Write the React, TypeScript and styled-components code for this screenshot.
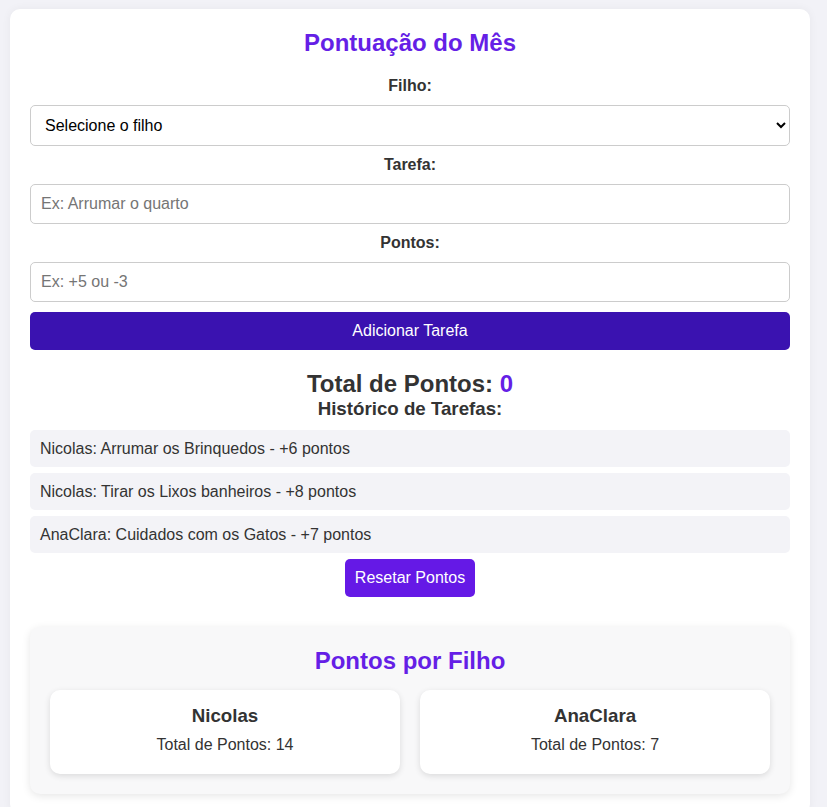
import { FC } from 'react'
import styled, { createGlobalStyle } from 'styled-components'

const GlobalStyle = createGlobalStyle`
  html, body {
    overflow: hidden;
  }
  body {
    margin: 0;
    padding: 9px 10px;
    background-color: #f2f2f7;
    font-family: 'Liberation Sans', Arial, sans-serif;
    color: #333;
  }
`

const Container = styled.div`
  width: 800px;
  box-sizing: border-box;
  background-color: #fff;
  border-radius: 10px;
  padding: 20px;
  box-shadow: 0 0 10px rgba(0, 0, 0, 0.05);
`

const Title = styled.h2`
  margin: 0 0 20px;
  font-size: 24px;
  text-align: center;
  color: #651fe6;
`

const Field = styled.div`
  display: flex;
  flex-direction: column;
  gap: 10px;
  margin-bottom: 10px;
`

const Label = styled.label`
  font-weight: bold;
  font-size: 16px;
  text-align: center;
  color: #333;
`

const Select = styled.select`
  height: 41px;
  padding: 0 10px;
  font-family: inherit;
  font-size: 16px;
  color: #000;
  border: 1px solid #ccc;
  border-radius: 5px;
  background: #fff;
`

const Input = styled.input`
  height: 40px;
  box-sizing: border-box;
  padding: 10px;
  font-family: inherit;
  font-size: 16px;
  border: 1px solid #ccc;
  border-radius: 5px;
  &::placeholder {
    color: #757575;
  }
`

const Button = styled.button<{ $variant?: 'primary' | 'reset' }>`
  height: 38px;
  padding: 0 10px;
  border: none;
  border-radius: 5px;
  font-family: inherit;
  font-size: 16px;
  color: #fff;
  cursor: pointer;
  background-color: ${(p) => (p.$variant === 'reset' ? '#6519e6' : '#3a12b0')};
  width: ${(p) => (p.$variant === 'reset' ? 'auto' : '100%')};
`

const Total = styled.h2`
  margin: 20px 0 0;
  font-size: 24px;
  text-align: center;
  color: #333;
  span {
    color: #651fe6;
  }
`

const HistoryTitle = styled.h3`
  margin: 0 0 10px;
  font-size: 18.72px;
  text-align: center;
  color: #333;
`

const HistoryList = styled.ul`
  list-style: none;
  margin: 0;
  padding: 0;
  display: flex;
  flex-direction: column;
  gap: 6px;
`

const HistoryItem = styled.li`
  background-color: #f3f3f7;
  border-radius: 5px;
  padding: 9px 10px;
  font-size: 16px;
  line-height: 19px;
  color: #333;
`

const Center = styled.div`
  display: flex;
  justify-content: center;
  margin-top: 6px;
`

const Summary = styled.section`
  margin-top: 30px;
  background-color: #f8f8f9;
  border-radius: 10px;
  padding: 20px;
  box-shadow: 0 2px 8px rgba(0, 0, 0, 0.1);
`

const SummaryTitle = styled.h2`
  margin: 0 0 15px;
  font-size: 24px;
  text-align: center;
  color: #651fe6;
`

const Cards = styled.div`
  display: grid;
  grid-template-columns: 1fr 1fr;
  gap: 20px;
`

const Card = styled.div`
  background-color: #fff;
  border-radius: 10px;
  padding: 15px 15px 20px;
  text-align: center;
  box-shadow: 0 2px 6px rgba(0, 0, 0, 0.12);
`

const CardName = styled.h3`
  margin: 0 0 9px;
  font-size: 18.72px;
  color: #333;
`

const CardTotal = styled.p`
  margin: 0;
  font-size: 16px;
  color: #333;
`

const history = [
  'Nicolas: Arrumar os Brinquedos - +6 pontos',
  'Nicolas: Tirar os Lixos banheiros - +8 pontos',
  'AnaClara: Cuidados com os Gatos - +7 pontos'
]

const kids = [
  { name: 'Nicolas', total: 14 },
  { name: 'AnaClara', total: 7 }
]

const App: FC = () => (
  <>
    <GlobalStyle />
    <Container>
      <Title>Pontuação do Mês</Title>
      <Field>
        <Label htmlFor='filho'>Filho:</Label>
        <Select id='filho' defaultValue=''>
          <option value=''>Selecione o filho</option>
          <option value='Nicolas'>Nicolas</option>
          <option value='AnaClara'>AnaClara</option>
        </Select>
      </Field>
      <Field>
        <Label htmlFor='tarefa'>Tarefa:</Label>
        <Input id='tarefa' placeholder='Ex: Arrumar o quarto' />
      </Field>
      <Field>
        <Label htmlFor='pontos'>Pontos:</Label>
        <Input id='pontos' placeholder='Ex: +5 ou -3' />
      </Field>
      <Button>Adicionar Tarefa</Button>

      <Total>
        Total de Pontos: <span>0</span>
      </Total>
      <HistoryTitle>Histórico de Tarefas:</HistoryTitle>
      <HistoryList>
        {history.map((item) => (
          <HistoryItem key={item}>{item}</HistoryItem>
        ))}
      </HistoryList>
      <Center>
        <Button $variant='reset'>Resetar Pontos</Button>
      </Center>

      <Summary>
        <SummaryTitle>Pontos por Filho</SummaryTitle>
        <Cards>
          {kids.map((kid) => (
            <Card key={kid.name}>
              <CardName>{kid.name}</CardName>
              <CardTotal>Total de Pontos: {kid.total}</CardTotal>
            </Card>
          ))}
        </Cards>
      </Summary>
    </Container>
  </>
)

export default App
